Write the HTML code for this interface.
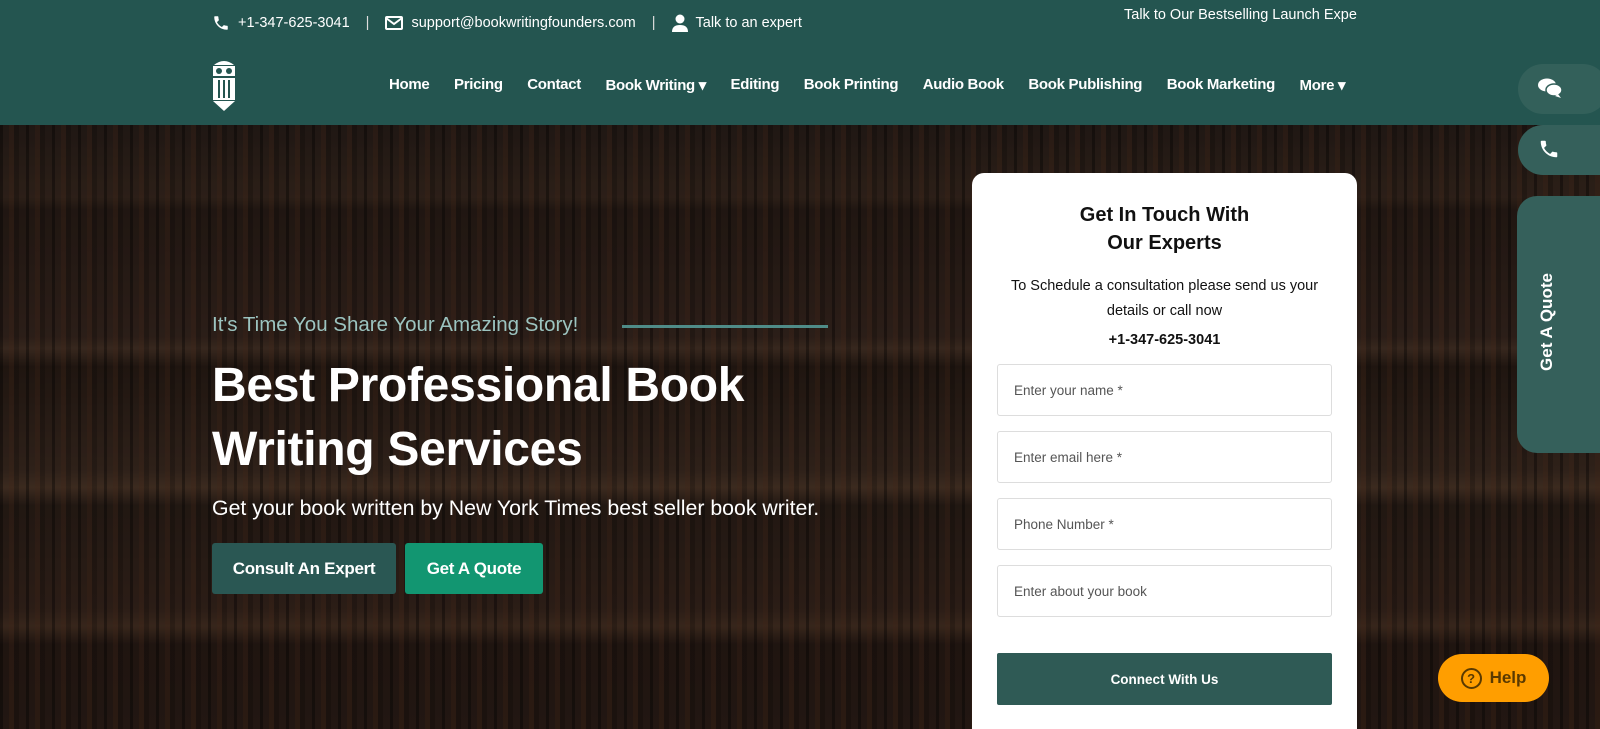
<!DOCTYPE html>
<html><head><meta charset="utf-8"><style>
*{margin:0;padding:0;box-sizing:border-box}
html{width:1600px;height:729px;overflow:hidden}
body{width:1600px;height:729px;overflow:hidden;position:relative;font-family:"Liberation Sans",sans-serif;background:#1e1612}
.hdr{position:absolute;left:0;top:0;width:1600px;height:125px;background:#245550;color:#fff}
.top{position:absolute;top:14px;left:212px;font-size:14.5px;display:flex;align-items:center;gap:8px}
.top .sep{margin:0 8px;color:#ddd}
.launch{position:absolute;top:7px;left:1124px;font-size:14.5px;color:#fff;width:234px;overflow:hidden;white-space:nowrap}
.nav{position:absolute;top:76px;left:389px;display:flex;font-weight:bold;font-size:15px;letter-spacing:-.3px}
.nav span{margin-right:24.5px}
.hero{position:absolute;top:125px;left:0;width:1600px;height:604px;
background:
repeating-linear-gradient(90deg,rgba(0,0,0,.35) 0 3px,rgba(0,0,0,0) 3px 9px,rgba(90,50,30,.25) 9px 14px,rgba(0,0,0,.2) 14px 19px,rgba(0,0,0,0) 19px 26px),
linear-gradient(180deg,#2a1f1a 0,#3b2a20 12%,#2b1e18 14%,#3a2820 35%,#4a3528 37%,#2a1d16 40%,#3e2c22 57%,#50392a 60%,#2d2019 63%,#3a271e 80%,#4a3325 83%,#2a1c16 86%,#2e1f18 100%);}
.hero::after{content:"";position:absolute;inset:0;background:rgba(0,0,0,.25)}
.tag{position:absolute;left:212px;top:313px;font-size:20.5px;color:#9cc4c0;z-index:2}
.line{position:absolute;left:622px;top:325px;width:206px;height:3px;background:#4f8c88;z-index:2}
h1{position:absolute;left:212px;top:354px;font-size:48px;line-height:64px;color:#fff;font-weight:bold;z-index:2;letter-spacing:-.3px}
.sub{position:absolute;left:212px;top:496px;font-size:21.3px;color:#fff;z-index:2}
.btn{position:absolute;top:543px;height:51px;color:#fff;font-weight:bold;font-size:17px;display:flex;align-items:center;justify-content:center;border-radius:3px;z-index:2;letter-spacing:-.3px}
.card{position:absolute;left:972px;top:173px;width:385px;height:556px;background:#fff;border-radius:12px 12px 0 0;z-index:3;text-align:center;color:#111}
.card h3{margin-top:28px;font-size:20px;line-height:28px}
.card p{margin-top:17px;font-size:14.5px;line-height:25px;padding:0 20px}
.card .ph{margin-top:8px;font-weight:bold;font-size:14.5px}
.inp{position:absolute;left:25px;width:335px;height:52px;border:1px solid #ddd;border-radius:3px;font-size:13.5px;color:#555;text-align:left;padding:18px 16px}
.sbtn{position:absolute;left:25px;top:480px;width:335px;height:52px;background:#2f5a55;color:#fff;font-weight:bold;font-size:13.5px;display:flex;align-items:center;justify-content:center;border-radius:2px}
.tab{position:absolute;background:#35605b;z-index:4}
</style></head><body>
<div class="hdr">
<div class="top">
<svg width="18" height="18" viewBox="0 0 24 24"><path fill="#fff" d="M6.6 10.8c1.4 2.8 3.8 5.1 6.6 6.6l2.2-2.2c.3-.3.7-.4 1-.2 1.1.4 2.3.6 3.6.6.6 0 1 .4 1 1V20c0 .6-.4 1-1 1C10.6 21 3 13.4 3 4c0-.6.4-1 1-1h3.5c.6 0 1 .4 1 1 0 1.3.2 2.5.6 3.6.1.3 0 .7-.2 1z"/></svg>
<span>+1-347-625-3041</span><span class="sep">|</span>
<svg width="18" height="14" viewBox="0 0 18 14"><rect x="1" y="1" width="16" height="12" rx="1" fill="none" stroke="#fff" stroke-width="2"/><path d="M1 2l8 6 8-6" fill="none" stroke="#fff" stroke-width="2"/></svg>
<span>support@bookwritingfounders.com</span><span class="sep">|</span>
<svg width="16" height="18" viewBox="0 0 16 18"><circle cx="8" cy="5" r="4.5" fill="#fff"/><path d="M0 18c0-5 3-7 8-7s8 2 8 7z" fill="#fff"/></svg>
<span>Talk to an expert</span></div>
<div class="launch">Talk to Our Bestselling Launch Expe</div>
<svg style="position:absolute;left:211px;top:57px" width="26" height="55" viewBox="0 0 26 55"><path d="M3 8 Q13 0 23 8Z" fill="#fff"/><rect x="2" y="9" width="22" height="10" fill="#fff"/><circle cx="8" cy="14" r="3" fill="#245550"/><circle cx="18" cy="14" r="3" fill="#245550"/><rect x="2" y="21" width="22" height="22" fill="#fff"/><rect x="7" y="23" width="2" height="18" fill="#245550"/><rect x="12" y="23" width="2" height="18" fill="#245550"/><rect x="17" y="23" width="2" height="18" fill="#245550"/><path d="M2 44h22L13 54Z" fill="#fff"/></svg>
<div class="nav"><span>Home</span><span>Pricing</span><span>Contact</span><span>Book Writing ▾</span><span>Editing</span><span>Book Printing</span><span>Audio Book</span><span>Book Publishing</span><span>Book Marketing</span><span>More ▾</span></div>
</div>
<div class="hero"></div>
<div class="tag">It's Time You Share Your Amazing Story!</div><div class="line"></div>
<h1>Best Professional Book<br>Writing Services</h1>
<div class="sub">Get your book written by New York Times best seller book writer.</div>
<div class="btn" style="left:212px;width:184px;background:#2a5753">Consult An Expert</div>
<div class="btn" style="left:405px;width:138px;background:#129671">Get A Quote</div>
<div class="card">
<h3>Get In Touch With<br>Our Experts</h3>
<p>To Schedule a consultation please send us your details or call now</p>
<div class="ph">+1-347-625-3041</div>
<div class="inp" style="top:191px">Enter your name *</div>
<div class="inp" style="top:258px">Enter email here *</div>
<div class="inp" style="top:325px">Phone Number *</div>
<div class="inp" style="top:392px">Enter about your book</div>
<div class="sbtn">Connect With Us</div>
</div>
<div class="tab" style="left:1518px;top:64px;width:90px;height:50px;border-radius:25px;background:#33605a"><svg style="position:absolute;left:20px;top:14px" width="24" height="20" viewBox="0 0 24 20"><ellipse cx="9" cy="7" rx="9" ry="6.5" fill="#fff"/><ellipse cx="16" cy="12" rx="8" ry="6" fill="#fff" stroke="#33605a" stroke-width="1.5"/><path d="M20 16l3 4-6-2z" fill="#fff"/></svg></div>
<div class="tab" style="left:1518px;top:125px;width:90px;height:50px;border-radius:25px 0 0 25px"><svg style="position:absolute;left:20px;top:13px" width="22" height="22" viewBox="0 0 24 24"><path fill="#fff" d="M6.6 10.8c1.4 2.8 3.8 5.1 6.6 6.6l2.2-2.2c.3-.3.7-.4 1-.2 1.1.4 2.3.6 3.6.6.6 0 1 .4 1 1V20c0 .6-.4 1-1 1C10.6 21 3 13.4 3 4c0-.6.4-1 1-1h3.5c.6 0 1 .4 1 1 0 1.3.2 2.5.6 3.6.1.3 0 .7-.2 1z"/></svg></div>
<div class="tab" style="left:1517px;top:196px;width:90px;height:257px;border-radius:20px 0 0 20px"><div style="position:absolute;left:-25px;top:116px;transform:rotate(-90deg);transform-origin:center;width:110px;text-align:center;color:#fff;font-weight:bold;font-size:17px;white-space:nowrap">Get A Quote</div></div>
<div style="position:absolute;left:1438px;top:654px;width:111px;height:48px;border-radius:24px;background:#ff9e00;z-index:5;display:flex;align-items:center;justify-content:center;gap:8px;font-weight:bold;font-size:17px;color:#5a3a00"><span style="width:21px;height:21px;border:2px solid #5a3a00;border-radius:50%;font-size:13px;display:flex;align-items:center;justify-content:center">?</span>Help</div>
</body></html>
